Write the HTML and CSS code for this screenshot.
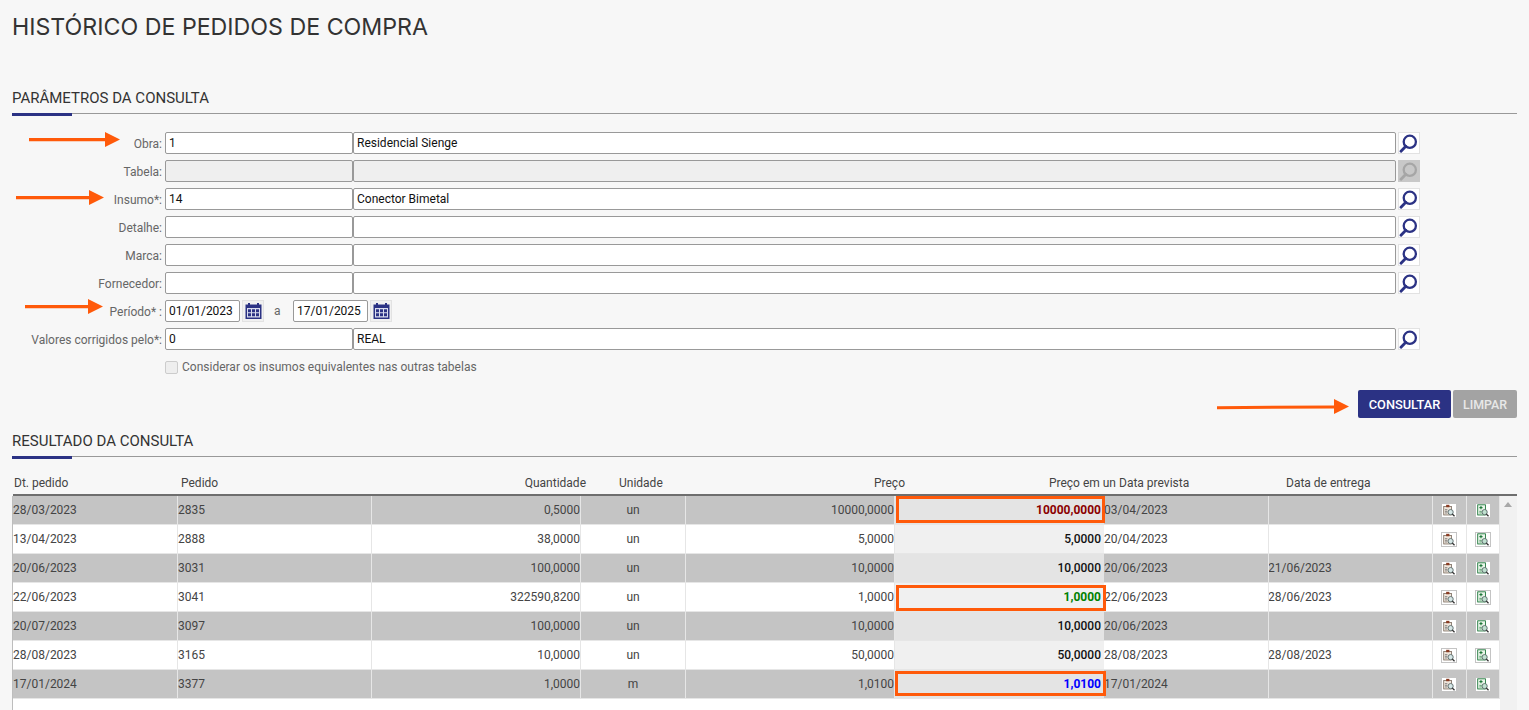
FILE: index.html
```html
<!DOCTYPE html>
<html lang="pt-BR">
<head>
<meta charset="utf-8">
<title>Histórico de Pedidos de Compra</title>
<link rel="stylesheet" href="styles.css">
</head>
<body>
<svg class="defs" width="0" height="0" aria-hidden="true">
  <symbol id="i-search" viewBox="1 1 20 20">
    <circle cx="11.800" cy="9.800" r="6.100" fill="none" stroke="currentColor" stroke-width="2.300"/>
    <path d="M7.800 14.200 3 19.200" fill="none" stroke="currentColor" stroke-width="2.800" stroke-linecap="round"/>
  </symbol>
  <symbol id="i-cal" viewBox="1 1 20 20">
    <rect x="3.500" y="4.500" width="16" height="14.500" fill="#2b3284"/>
    <rect x="6" y="3" width="2" height="3" fill="#2b3284"/>
    <rect x="15" y="3" width="2" height="3" fill="#2b3284"/>
    <rect x="5" y="8" width="13" height="9.500" fill="#d9dcee"/>
    <path d="M6 9.200h3v3H6zM10 9.200h3v3h-3zM14 9.200h3v3h-3zM6 13.200h3v3H6zM10 13.200h3v3h-3zM14 13.200h3v3h-3z" fill="#2b3284"/>
  </symbol>
  <symbol id="i-doc" viewBox="0 0 16 16">
    <rect x="1.500" y="3" width="9.500" height="10.500" fill="#efe6dc" stroke="#7a6a5c"/>
    <rect x="4.500" y="1" width="4" height="3" fill="#8a3b22"/>
    <path d="M3 7h3M3 9h3M3 11h3" stroke="#6d6d6d"/>
    <circle cx="10" cy="10" r="3.200" fill="#d5e6e6" stroke="#5a6a6a" stroke-width="1.100"/>
    <path d="m12 12.300 2.800 2.800" stroke="#333" stroke-width="1.600"/>
  </symbol>
  <symbol id="i-sheet" viewBox="0 0 16 16">
    <rect x="1.500" y="1" width="9.500" height="12.500" fill="#eaf6ea" stroke="#0b6b2a"/>
    <path d="M3.500 4.500h4M5.500 2.500v4" stroke="#0b6b2a" stroke-width="1.200"/>
    <path d="M3.500 9h3M3.500 11h3" stroke="#3a8a52"/>
    <circle cx="10" cy="10" r="3.200" fill="#bfe0cf" stroke="#5a6a6a" stroke-width="1.100"/>
    <path d="m12 12.300 2.800 2.800" stroke="#333" stroke-width="1.600"/>
  </symbol>
</svg>

<h1 class="page-title">HISTÓRICO DE PEDIDOS DE COMPRA</h1>

<h2 class="section-title section-title--params">PARÂMETROS DA CONSULTA</h2>

<form class="form">
  <div class="row"><label class="lbl">Obra:</label><input class="in in-code" value="1"><input class="in in-desc" value="Residencial Sienge"><button type="button" class="lookup"><svg><use href="#i-search"/></svg></button></div>
  <div class="row"><label class="lbl">Tabela:</label><input class="in in-code" disabled><input class="in in-desc" disabled><button type="button" class="lookup lookup--off"><svg><use href="#i-search"/></svg></button></div>
  <div class="row"><label class="lbl">Insumo*:</label><input class="in in-code" value="14"><input class="in in-desc" value="Conector Bimetal"><button type="button" class="lookup"><svg><use href="#i-search"/></svg></button></div>
  <div class="row"><label class="lbl">Detalhe:</label><input class="in in-code"><input class="in in-desc"><button type="button" class="lookup"><svg><use href="#i-search"/></svg></button></div>
  <div class="row"><label class="lbl">Marca:</label><input class="in in-code"><input class="in in-desc"><button type="button" class="lookup"><svg><use href="#i-search"/></svg></button></div>
  <div class="row"><label class="lbl">Fornecedor:</label><input class="in in-code"><input class="in in-desc"><button type="button" class="lookup"><svg><use href="#i-search"/></svg></button></div>
  <div class="row"><label class="lbl">Período* :</label><input class="in in-date" value="01/01/2023"><button type="button" class="cal"><svg><use href="#i-cal"/></svg></button><span class="sep">a</span><input class="in in-date" value="17/01/2025"><button type="button" class="cal"><svg><use href="#i-cal"/></svg></button></div>
  <div class="row"><label class="lbl">Valores corrigidos pelo*:</label><input class="in in-code" value="0"><input class="in in-desc" value="REAL"><button type="button" class="lookup"><svg><use href="#i-search"/></svg></button></div>
  <div class="row"><span class="lbl"></span><label class="check"><input type="checkbox" disabled><span>Considerar os insumos equivalentes nas outras tabelas</span></label></div>
</form>

<div class="actions">
  <button type="button" class="btn btn--primary">CONSULTAR</button>
  <button type="button" class="btn btn--muted">LIMPAR</button>
</div>

<h2 class="section-title section-title--result">RESULTADO DA CONSULTA</h2>

<section class="results">
  <div class="thead">
    <span class="h h-dt">Dt. pedido</span>
    <span class="h h-ped">Pedido</span>
    <span class="h h-qt">Quantidade</span>
    <span class="h h-un">Unidade</span>
    <span class="h h-pr">Preço</span>
    <span class="h h-pu">Preço em un</span>
    <span class="h h-dp">Data prevista</span>
    <span class="h h-de">Data de entrega</span>
  </div>
  <div class="tbody">
    <div class="rows">
      <div class="tr"><span>28/03/2023</span><span>2835</span><span class="r">0,5000</span><span class="c">un</span><span class="r">10000,0000</span><span class="r pu pu-red">10000,0000</span><span>03/04/2023</span><span class="de"></span><span class="ic"><svg><use href="#i-doc"/></svg></span><span class="ic"><svg><use href="#i-sheet"/></svg></span></div>
      <div class="tr"><span>13/04/2023</span><span>2888</span><span class="r">38,0000</span><span class="c">un</span><span class="r">5,0000</span><span class="r pu">5,0000</span><span>20/04/2023</span><span class="de"></span><span class="ic"><svg><use href="#i-doc"/></svg></span><span class="ic"><svg><use href="#i-sheet"/></svg></span></div>
      <div class="tr"><span>20/06/2023</span><span>3031</span><span class="r">100,0000</span><span class="c">un</span><span class="r">10,0000</span><span class="r pu">10,0000</span><span>20/06/2023</span><span class="de">21/06/2023</span><span class="ic"><svg><use href="#i-doc"/></svg></span><span class="ic"><svg><use href="#i-sheet"/></svg></span></div>
      <div class="tr"><span>22/06/2023</span><span>3041</span><span class="r">322590,8200</span><span class="c">un</span><span class="r">1,0000</span><span class="r pu pu-green">1,0000</span><span>22/06/2023</span><span class="de">28/06/2023</span><span class="ic"><svg><use href="#i-doc"/></svg></span><span class="ic"><svg><use href="#i-sheet"/></svg></span></div>
      <div class="tr"><span>20/07/2023</span><span>3097</span><span class="r">100,0000</span><span class="c">un</span><span class="r">10,0000</span><span class="r pu">10,0000</span><span>20/06/2023</span><span class="de"></span><span class="ic"><svg><use href="#i-doc"/></svg></span><span class="ic"><svg><use href="#i-sheet"/></svg></span></div>
      <div class="tr"><span>28/08/2023</span><span>3165</span><span class="r">10,0000</span><span class="c">un</span><span class="r">50,0000</span><span class="r pu">50,0000</span><span>28/08/2023</span><span class="de">28/08/2023</span><span class="ic"><svg><use href="#i-doc"/></svg></span><span class="ic"><svg><use href="#i-sheet"/></svg></span></div>
      <div class="tr"><span>17/01/2024</span><span>3377</span><span class="r">1,0000</span><span class="c">m</span><span class="r">1,0100</span><span class="r pu pu-blue">1,0100</span><span>17/01/2024</span><span class="de"></span><span class="ic"><svg><use href="#i-doc"/></svg></span><span class="ic"><svg><use href="#i-sheet"/></svg></span></div>
    </div>
    <div class="scrollbar"><i class="scroll-up"></i></div>
  </div>
</section>

<div class="mark mark-1"></div>
<div class="mark mark-2"></div>
<div class="mark mark-3"></div>

<svg class="arrow arrow-1" width="91" height="15"><path d="M0 6H76V0L91 7.500 76 15V9.200H0Z"/></svg>
<svg class="arrow arrow-2" width="88" height="15"><path d="M0 6H73V0L88 7.500 73 15V9.200H0Z"/></svg>
<svg class="arrow arrow-3" width="78" height="15"><path d="M0 6H63V0L78 7.500 63 15V9.200H0Z"/></svg>
<svg class="arrow arrow-4" width="132" height="15"><path d="M0 7.200 117 6.400V0L132 7.500 117 15V9.400L0 10.200Z"/></svg>
</body>
</html>
```
FILE: styles.css
```css
* { box-sizing: border-box; }
html, body { height: 100%; }
body {
  margin: 0;
  padding: 0 12px;
  background: #f7f7f7;
  font: 12px/14px Roboto, "Liberation Sans", sans-serif;
  color: #555;
  overflow: hidden;
  display: flex;
  flex-direction: column;
  position: relative;
}
.defs { position: absolute; }

.page-title {
  margin: 13px 0 0;
  font: 400 23.200px/28px Inter, "Open Sans", sans-serif;
  color: #333;
  height: 28px;
}
.section-title {
  margin: 0;
  height: 26px;
  font: 400 15px/20px Roboto, sans-serif;
  color: #333;
  border-bottom: 1px solid #999;
  position: relative;
}
.section-title::after {
  content: "";
  position: absolute;
  left: 0;
  bottom: -3px;
  width: 60px;
  height: 3px;
  background: #2b3284;
}
.section-title--params { margin-top: 47px; }
.section-title--result { margin-top: 13px; }

.form { margin-top: 18px; display: flex; flex-direction: column; gap: 6px; }
.row { display: flex; align-items: center; height: 22px; }
.lbl { width: 153px; padding-right: 3px; text-align: right; flex: none; color: #666; padding-top: 2px; }
.in {
  height: 22px;
  border: 1px solid #999;
  border-radius: 2px;
  background: #fff;
  font: 12px Roboto, sans-serif;
  color: #111;
  padding: 0 3px;
  flex: none;
  outline: none;
}
.in:disabled { background: #efefef; }
.in-code { width: 188px; }
.in-desc { width: 1043px; }
.in-date { width: 75px; }
.lookup, .cal {
  width: 22px;
  height: 22px;
  flex: none;
  padding: 0;
  background: #fff;
  border: 1px solid #e2e2e2;
  color: #2b3284;
  display: flex;
}
.lookup svg, .cal svg { width: 20px; height: 20px; }
.lookup { margin-left: 2px; }
.cal { margin-left: 2px; background: #f0f0f0; }
.lookup--off { background: #c8c8c8; border-color: #c8c8c8; color: #a6a6a6; }
.sep { width: 29px; padding-left: 10px; flex: none; color: #666; }
.check { display: flex; align-items: center; gap: 4px; color: #666; }
.check input {
  appearance: none;
  margin: 0;
  width: 13px;
  height: 13px;
  border: 1px solid #ccc;
  border-radius: 2px;
  background: #eee;
}

.actions { display: flex; justify-content: flex-end; gap: 2px; margin-top: 12px; }
.btn {
  height: 28px;
  border: 0;
  border-radius: 2px;
  color: #fff;
  font: 500 12.800px Roboto, sans-serif;
  padding: 0;
}
.btn--primary { width: 93px; background: #2b3284; }
.btn--muted { width: 64px; background: #a3a3a3; color: #e8e8e8; font-size: 12.400px; }

.results { flex: 1; min-height: 0; display: flex; flex-direction: column; margin-top: 1px; }
.thead {
  height: 38px;
  flex: none;
  position: relative;
  border-bottom: 2px solid #6e6e6e;
  margin-left: 1px;
  color: #444;
}
.h { position: absolute; top: 18px; white-space: nowrap; }
.h-dt { left: 1px; }
.h-ped { left: 168px; }
.h-qt { right: 931px; }
.h-un { left: 606px; }
.h-pr { right: 612px; }
.h-pu { right: 401px; }
.h-dp { left: 1106px; }
.h-de { left: 1273px; }

.tbody {
  flex: 1;
  min-height: 0;
  display: flex;
  background: #fff;
  border-left: 1px solid #bdbdbd;
}
.rows { flex: 1; }
.tr {
  display: grid;
  grid-template-columns: 165px 194px 209px 105px 209px 209px 165px 164px 34px 33px;
  height: 29px;
  align-items: stretch;
  color: #444;
  background: #fff;
  border-bottom: 1px solid #e6e6e6;
}
.tr:nth-child(odd) { background: #c4c4c4; }
.tr > span {
  padding-top: 7px;
  border-right: 1px solid #e6e6e6;
  white-space: nowrap;
  overflow: hidden;
}
.tr > span.r { text-align: right; }
.tr > span.c { text-align: center; }
.tr > span.de { text-indent: -1px; }
.tr > span.pu {
  font-weight: 500;
  color: #111;
  background: #f0f0f0;
  padding-right: 3px;
  border-right: 0;
}
.tr:nth-child(odd) > span.pu { background: #e4e4e4; }
.tr > span.pu-red { color: #8b0000; font-weight: 700; }
.tr > span.pu-green { color: #008000; font-weight: 700; }
.tr > span.pu-blue { color: #0000ff; font-weight: 700; }
.tr > span.ic { padding: 7px 0 0 8px; }
.ic svg { width: 16px; height: 15px; background: #fff; border: 1px solid #c4c4c4; display: block; }
.scrollbar { width: 17px; flex: none; background: #f1f1f1; position: relative; }
.scroll-up {
  position: absolute;
  left: 4px;
  top: 6px;
  border: 4px solid transparent;
  border-top: 0;
  border-bottom: 5px solid #a8a8a8;
}

.mark { position: absolute; border: 3px solid #ff5a0a; }
.mark-1 { left: 896px; top: 496px; width: 209px; height: 27px; }
.mark-2 { left: 896px; top: 585px; width: 210px; height: 26px; }
.mark-3 { left: 895px; top: 671px; width: 211px; height: 25px; }

.arrow { position: absolute; fill: #ff5a0a; }
.arrow-1 { left: 29px; top: 132px; }
.arrow-2 { left: 16px; top: 190px; }
.arrow-3 { left: 25px; top: 299px; }
.arrow-4 { left: 1217px; top: 399px; }
```
